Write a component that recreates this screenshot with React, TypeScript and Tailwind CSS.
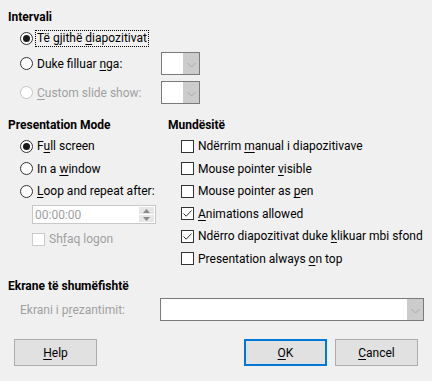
import React from "react";

function Radio({ checked = false, disabled = false }: { checked?: boolean; disabled?: boolean }) {
  return (
    <span
      className={`relative inline-flex w-[13px] h-[13px] shrink-0 rounded-full border items-center justify-center bg-white ${
        disabled ? "border-[#c4c4c4]" : "border-[#333333]"
      }`}
    >
      {checked && <span className="w-[7px] h-[7px] rounded-full bg-[#1a1a1a]" />}
    </span>
  );
}

function Check({ checked = false, disabled = false }: { checked?: boolean; disabled?: boolean }) {
  return (
    <span
      className={`relative inline-flex w-[13px] h-[13px] shrink-0 border items-center justify-center bg-white ${
        disabled ? "border-[#cccccc]" : "border-[#333333]"
      }`}
    >
      {checked && (
        <svg width="11" height="11" viewBox="0 0 11 11">
          <path d="M1.5 5.5 L4.2 8.2 L9.5 2.5" fill="none" stroke="#333" strokeWidth="1" />
        </svg>
      )}
    </span>
  );
}

function Chevron() {
  return (
    <svg width="9" height="6" viewBox="0 0 9 6">
      <path d="M0.5 1 L4.5 5 L8.5 1" fill="none" stroke="#a8a8a8" strokeWidth="1" />
    </svg>
  );
}

function SmallCombo() {
  return (
    <div className="flex w-[39px] h-[23px] border border-[#7a7a7a] bg-white">
      <div className="flex-1 bg-white" />
      <div className="w-[16px] bg-[#cccccc] flex items-center justify-center pt-[2px]">
        <Chevron />
      </div>
    </div>
  );
}

function Btn({ children, focused = false }: { children: React.ReactNode; focused?: boolean }) {
  return (
    <div
      className={`w-[83px] h-[27px] flex items-center justify-center bg-[#e1e1e1] ${
        focused ? "border-2 border-[#0078d7]" : "border border-[#adadad]"
      }`}
    >
      {children}
    </div>
  );
}

export default function App() {
  return (
    <div
      className="w-[432px] h-[381px] bg-[#f0f0f0] text-black text-[12px] leading-[16px] overflow-hidden whitespace-nowrap"
      style={{ fontFamily: "Roboto, 'Noto Sans', sans-serif" }}
    >
      {/* Intervali */}
      <div className="pt-[9px] pl-[8px]">
        <div className="h-[16px] font-bold">Intervali</div>
        <div className="pl-[12px]">
          <div className="mt-[3px] h-[20px] flex items-center gap-[3px]">
            <Radio checked />
            <span className="outline outline-1 outline-dotted outline-black px-[1px] leading-[15px]">
              Të gjithë <u className="underline-offset-2">d</u>iapozitivat
            </span>
          </div>
          <div className="mt-[4px] h-[23px] flex items-center">
            <div className="w-[141px] flex items-center gap-[4px]">
              <Radio />
              <span>
                Duke filluar <u className="underline-offset-2">n</u>ga:
              </span>
            </div>
            <SmallCombo />
          </div>
          <div className="mt-[6px] h-[23px] flex items-center text-[#a0a0a0]">
            <div className="w-[141px] flex items-center gap-[4px]">
              <Radio disabled />
              <span>
                <u className="underline-offset-2">C</u>ustom slide show:
              </span>
            </div>
            <SmallCombo />
          </div>
        </div>
      </div>

      {/* Two columns */}
      <div className="mt-[13px] flex">
        <div className="w-[160px] pl-[8px]">
          <div className="h-[16px] font-bold">Presentation Mode</div>
          <div className="pl-[12px] pt-[2px]">
            <div className="h-[22px] flex items-center gap-[4px]">
              <Radio checked />
              <span>
                F<u className="underline-offset-2">u</u>ll screen
              </span>
            </div>
            <div className="h-[23px] flex items-center gap-[4px]">
              <Radio />
              <span>
                In a <u className="underline-offset-2">w</u>indow
              </span>
            </div>
            <div className="h-[22px] flex items-center gap-[4px]">
              <Radio />
              <span>
                <u className="underline-offset-2">L</u>oop and repeat after:
              </span>
            </div>
            <div className="pl-[12px] pt-[3px]">
              <div className="w-[124px] h-[19px] border border-[#c8c8c8] bg-white flex items-center">
                <span className="flex-1 pl-[2px] text-[#a0a0a0]">00:00:00</span>
                <div className="w-[16px] h-full flex flex-col gap-[1px] py-[1px] pr-[1px]">
                  <div className="flex-1 bg-[#e6e6e6] flex items-center justify-center">
                    <svg width="7" height="4" viewBox="0 0 7 4">
                      <path d="M0 4 L3.5 0 L7 4 Z" fill="#8a8a8a" />
                    </svg>
                  </div>
                  <div className="flex-1 bg-[#e6e6e6] flex items-center justify-center">
                    <svg width="7" height="4" viewBox="0 0 7 4">
                      <path d="M0 0 L3.5 4 L7 0 Z" fill="#8a8a8a" />
                    </svg>
                  </div>
                </div>
              </div>
            </div>
            <div className="pl-[12px] mt-[4px] h-[22px] flex items-center gap-[4px] text-[#a0a0a0]">
              <Check disabled />
              <span>
                Sh<u className="underline-offset-2">f</u>aq logon
              </span>
            </div>
          </div>
        </div>
        <div className="pl-[8px]">
          <div className="h-[16px] font-bold">Mundësitë</div>
          <div className="pl-[13px] pt-[2px]">
            <div className="h-[22px] flex items-center gap-[4px]">
              <Check />
              <span>
                Ndërrim <u className="underline-offset-2">m</u>anual i diapozitivave
              </span>
            </div>
            <div className="h-[23px] flex items-center gap-[4px]">
              <Check />
              <span>
                Mouse pointer <u className="underline-offset-2">v</u>isible
              </span>
            </div>
            <div className="h-[22px] flex items-center gap-[4px]">
              <Check />
              <span>
                Mouse pointer as <u className="underline-offset-2">p</u>en
              </span>
            </div>
            <div className="h-[23px] flex items-center gap-[4px]">
              <Check checked />
              <span>
                <u className="underline-offset-2">A</u>nimations allowed
              </span>
            </div>
            <div className="h-[22px] flex items-center gap-[4px]">
              <Check checked />
              <span>
                Ndërro diapozitivat duke <u className="underline-offset-2">k</u>likuar mbi sfond
              </span>
            </div>
            <div className="h-[23px] flex items-center gap-[4px]">
              <Check />
              <span>
                Presentation always <u className="underline-offset-2">o</u>n top
              </span>
            </div>
          </div>
        </div>
      </div>

      {/* Ekrane */}
      <div className="mt-[8px] pl-[8px]">
        <div className="h-[16px] font-bold">Ekrane të shumëfishtë</div>
        <div className="mt-[4px] flex items-center h-[23px]">
          <span className="w-[152px] pl-[12px] text-[#a0a0a0]">
            Ekrani i p<u className="underline-offset-2">r</u>ezantimit:
          </span>
          <div className="flex w-[264px] h-[23px] border border-[#7a7a7a] bg-white">
            <div className="flex-1" />
            <div className="w-[16px] bg-[#cccccc] flex items-center justify-center pt-[2px]">
              <Chevron />
            </div>
          </div>
        </div>
      </div>

      {/* Buttons */}
      <div className="mt-[18px] flex pl-[14px] pr-[14px]">
        <Btn>
          <span>
            <u className="underline-offset-2">H</u>elp
          </span>
        </Btn>
        <div className="flex-1" />
        <Btn focused>
          <span>
            <u className="underline-offset-2">O</u>K
          </span>
        </Btn>
        <div className="w-[8px]" />
        <Btn>
          <span>
            <u className="underline-offset-2">C</u>ancel
          </span>
        </Btn>
      </div>
    </div>
  );
}
